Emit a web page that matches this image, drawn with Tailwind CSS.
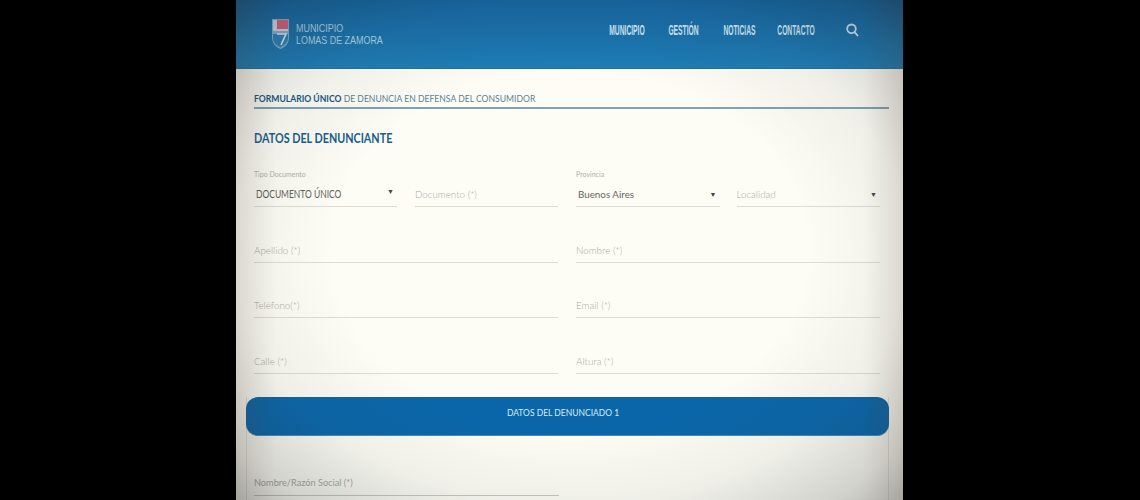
<!DOCTYPE html>
<html lang="en">
<head>
    <meta charset="UTF-8">
    <title>Municipio Lomas de Zamora</title>
    <script src="https://cdn.jsdelivr.net/npm/@tailwindcss/browser@4"></script>
</head>
<body class="bg-black overflow-hidden h-[500px] font-['Lato','Liberation_Sans',sans-serif]">
    <div class="relative ml-[236px] w-[667px] h-[500px] overflow-hidden bg-[#fdfdf6]">
      <!-- Header -->
      <header class="h-[69px] bg-gradient-to-b from-[#14649f] to-[#1e7db6] border-b border-[#2a6f97] flex items-center pl-[35px] pr-[44px]">
        <a class="flex items-center gap-[6px] text-[#a9d2e6]" href="#">
          <svg width="19" height="32" viewBox="0 0 19 32">
            <path d="M1 1h17v18c0 7-4 10-8.500 12C5 29 1 26 1 19z" fill="#7fb0d0"/>
            <path d="M2 2h15v11H2z" fill="#c9d6e4"/>
            <path d="M6 2h11v9H6z" fill="#d4607c"/>
            <path d="M2 16h15v4c0 5-4 7-7.500 9.500C6 27.500 2 25 2 20z" fill="#2d80b6"/>
            <path d="M6 16h9l-5 11" fill="none" stroke="#d8e8f2" stroke-width="1.600"/>
          </svg>
          <span class="block w-[88px] text-[10.500px] leading-[12px] font-['Liberation_Sans',sans-serif]">
            <span class="block h-[12px] origin-left scale-x-[.85] whitespace-nowrap">MUNICIPIO</span>
            <span class="block h-[12px] origin-left scale-x-[.85] whitespace-nowrap">LOMAS DE ZAMORA</span>
          </span>
        </a>
        <nav class="ml-auto flex items-center font-['Liberation_Sans',sans-serif] font-bold text-[14px] text-[#cfe6f1] h-full pb-[8px]">
          <a href="#" class="w-[36px] flex justify-center"><span class="inline-block scale-x-[.48] whitespace-nowrap">MUNICIPIO</span></a>
          <a href="#" class="w-[30px] ml-[23px] flex justify-center"><span class="inline-block scale-x-[.48] whitespace-nowrap">GESTIÓN</span></a>
          <a href="#" class="w-[33px] ml-[25px] flex justify-center"><span class="inline-block scale-x-[.48] whitespace-nowrap">NOTICIAS</span></a>
          <a href="#" class="w-[36px] ml-[22px] flex justify-center"><span class="inline-block scale-x-[.48] whitespace-nowrap">CONTACTO</span></a>
          <svg class="ml-[32px]" width="13" height="14" viewBox="0 0 13 14" fill="none" stroke="#cfe6f1" stroke-width="1.800">
            <circle cx="5.500" cy="5.800" r="4.300"/>
            <path d="M8.600 9.200 12 13"/>
          </svg>
        </nav>
      </header>

      <!-- Form -->
      <main class="px-[18px] pt-[22px]">
        <h1 class="w-[635px] h-[16px] box-content border-b-2 border-[#7fa3b5] text-[10px] leading-[15px] text-[#5d7f92] whitespace-nowrap"><span class="inline-block origin-left scale-x-[.86]"><b class="text-[#17557f] font-bold">FORMULARIO ÚNICO</b> DE DENUNCIA EN DEFENSA DEL CONSUMIDOR</span></h1>
        <h2 class="mt-[20px] text-[13px] leading-[18px] font-bold text-[#155d8c] whitespace-nowrap origin-left scale-x-[.83]">DATOS DEL DENUNCIANTE</h2>

        <div class="mt-[18px] w-[626px] grid grid-cols-2 gap-x-[18px]">
          <div class="grid grid-cols-2 gap-x-[18px]">
            <div class="h-[42px] border-b border-[#dddcd5] relative flex items-end pb-[5px] pl-[2px] pr-[3px] justify-between text-[11px] leading-[14px] text-[#5f5f58]">
              <span class="absolute left-0 top-[5px] text-[7px] leading-[9px] text-[#b0b0aa]">Tipo Documento</span>
              <span class="w-[85px] origin-left scale-x-[.77] whitespace-nowrap">DOCUMENTO ÚNICO</span><span class="text-[7px] text-[#444] mb-[3px]">▼</span>
            </div>
            <div class="h-[42px] border-b border-[#dddcd5] flex items-end pb-[4px] text-[9.800px] font-light text-[#a9a9a2]">Documento (*)</div>
          </div>
          <div class="grid grid-cols-2 gap-x-[17px]">
            <div class="h-[42px] border-b border-[#dddcd5] relative flex items-end pb-[4px] pl-[2px] pr-[3px] justify-between text-[9.800px] text-[#66665f]">
              <span class="absolute left-0 top-[5px] text-[7px] leading-[9px] text-[#b0b0aa]">Provincia</span>
              Buenos Aires<span class="text-[7px] text-[#444] mb-[3px]">▼</span>
            </div>
            <div class="h-[42px] border-b border-[#dddcd5] flex items-end pb-[4px] justify-between pr-[3px] text-[9.800px] font-light text-[#a9a9a2]">Localidad<span class="text-[7px] text-[#444] mb-[3px]">▼</span></div>
          </div>

          <div class="mt-[13px] h-[42.500px] border-b border-[#dddcd5] flex items-end pb-[4px] text-[9.800px] font-light text-[#a9a9a2]">Apellido (*)</div>
          <div class="mt-[13px] h-[42.500px] border-b border-[#dddcd5] flex items-end pb-[4px] text-[9.800px] font-light text-[#a9a9a2]">Nombre (*)</div>
          <div class="mt-[13px] h-[42.500px] border-b border-[#dddcd5] flex items-end pb-[4px] text-[9.800px] font-light text-[#a9a9a2]">Teléfono(*)</div>
          <div class="mt-[13px] h-[42.500px] border-b border-[#dddcd5] flex items-end pb-[4px] text-[9.800px] font-light text-[#a9a9a2]">Email (*)</div>
          <div class="mt-[13px] h-[42.500px] border-b border-[#dddcd5] flex items-end pb-[4px] text-[9.800px] font-light text-[#a9a9a2]">Calle (*)</div>
          <div class="mt-[13px] h-[42.500px] border-b border-[#dddcd5] flex items-end pb-[4px] text-[9.800px] font-light text-[#a9a9a2]">Altura (*)</div>
        </div>

        <!-- Denunciado -->
        <section class="-ml-[8px] mt-[23px] w-[643px] h-[120px] border-x border-[#e6e6e1]">
          <div class="-mx-px h-[39px] rounded-[12px] bg-[#0a66a9] border-b border-[#3f8fc0] flex justify-center pr-[8px] text-[10px] leading-[30px] text-[#d5edf5]"><span class="inline-block scale-x-[.85] whitespace-nowrap">DATOS DEL DENUNCIADO 1</span></div>
          <div class="ml-[7px] mt-[21px] w-[305px] h-[39px] border-b border-[#c8c8c3] flex items-end pb-[5px] text-[9.200px] text-[#a9a9a3]">Nombre/Razón Social (*)</div>
        </section>
      </main>

      <!-- Photo vignette over the screenshot -->
      <div class="absolute inset-0 pointer-events-none bg-[linear-gradient(to_right,rgba(90,70,50,0.14),transparent_6%,transparent_94%,rgba(90,70,50,0.14))]"></div>
      <div class="absolute inset-0 pointer-events-none bg-[radial-gradient(ellipse_at_center,transparent_50%,rgba(60,60,60,0.07)_72%,rgba(40,40,40,0.2)_90%,rgba(30,30,30,0.32)_100%)]"></div>
    </div>
</body>
</html>
